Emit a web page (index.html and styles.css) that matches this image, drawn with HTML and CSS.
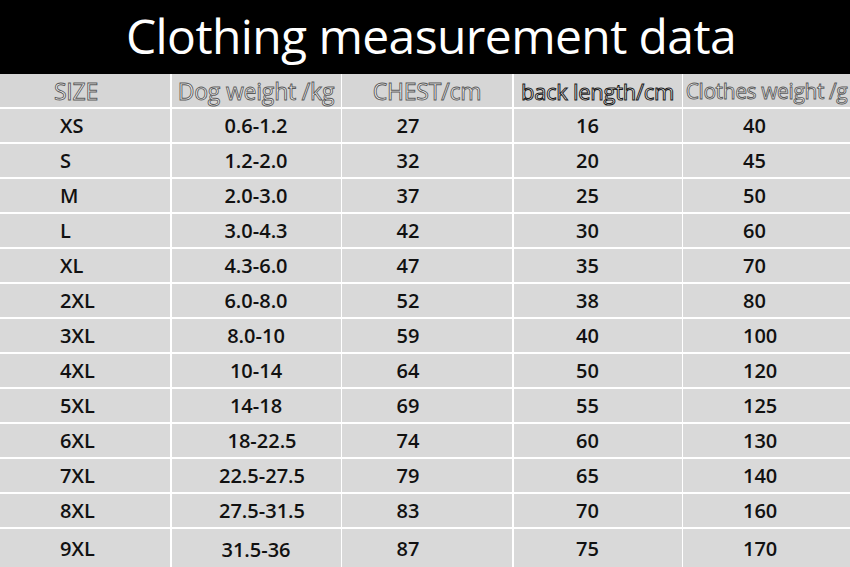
FILE: index.html
```html
<!DOCTYPE html>
<html lang="en">
<head>
<meta charset="utf-8">
<title>Clothing measurement data</title>
<link rel="stylesheet" href="styles.css">
</head>
<body>
<div class="page">
  <h1 class="title">Clothing measurement data</h1>
  <div class="table">
    <div class="th c1">SIZE</div>
    <div class="th c2">Dog weight /kg</div>
    <div class="th c3">CHEST/cm</div>
    <div class="th c4 dark">back length/cm</div>
    <div class="th c5">Clothes weight /g</div>

    <div class="td c1">XS</div><div class="td c2">0.6-1.2</div><div class="td c3">27</div><div class="td c4">16</div><div class="td c5">40</div>
    <div class="td c1">S</div><div class="td c2">1.2-2.0</div><div class="td c3">32</div><div class="td c4">20</div><div class="td c5">45</div>
    <div class="td c1">M</div><div class="td c2">2.0-3.0</div><div class="td c3">37</div><div class="td c4">25</div><div class="td c5">50</div>
    <div class="td c1">L</div><div class="td c2">3.0-4.3</div><div class="td c3">42</div><div class="td c4">30</div><div class="td c5">60</div>
    <div class="td c1">XL</div><div class="td c2">4.3-6.0</div><div class="td c3">47</div><div class="td c4">35</div><div class="td c5">70</div>
    <div class="td c1">2XL</div><div class="td c2">6.0-8.0</div><div class="td c3">52</div><div class="td c4">38</div><div class="td c5">80</div>
    <div class="td c1">3XL</div><div class="td c2">8.0-10</div><div class="td c3">59</div><div class="td c4">40</div><div class="td c5">100</div>
    <div class="td c1">4XL</div><div class="td c2">10-14</div><div class="td c3">64</div><div class="td c4">50</div><div class="td c5">120</div>
    <div class="td c1">5XL</div><div class="td c2">14-18</div><div class="td c3">69</div><div class="td c4">55</div><div class="td c5">125</div>
    <div class="td c1">6XL</div><div class="td c2 shift">18-22.5</div><div class="td c3">74</div><div class="td c4">60</div><div class="td c5">130</div>
    <div class="td c1">7XL</div><div class="td c2 shift">22.5-27.5</div><div class="td c3">79</div><div class="td c4">65</div><div class="td c5">140</div>
    <div class="td c1">8XL</div><div class="td c2 shift">27.5-31.5</div><div class="td c3">83</div><div class="td c4">70</div><div class="td c5">160</div>
    <div class="td c1">9XL</div><div class="td c2 low">31.5-36</div><div class="td c3">87</div><div class="td c4">75</div><div class="td c5">170</div>
  </div>
</div>
</body>
</html>
```

FILE: styles.css
```css
html, body {
  margin: 0;
  padding: 0;
  background: #d9d9d9;
}
.page {
  width: 850px;
  height: 567px;
  display: flex;
  flex-direction: column;
  overflow: hidden;
}
.title {
  margin: 0;
  height: 74px;
  flex: none;
  background: #000;
  color: #fff;
  font-family: "Open Sans", sans-serif;
  font-weight: 400;
  font-size: 48px;
  letter-spacing: -0.6px;
  line-height: 72px;
  text-align: center;
  padding-left: 12px;
  box-sizing: border-box;
}
.table {
  flex: 1;
  display: grid;
  grid-template-columns: 170px 169px 170px 168px 1fr;
  grid-template-rows: 33px repeat(12, 33px) 1fr;
  column-gap: 1.5px;
  row-gap: 2px;
  background: #fff;
}
.th, .td {
  background: #d9d9d9;
  display: flex;
  align-items: center;
  justify-content: center;
  font-family: "Open Sans", sans-serif;
  white-space: nowrap;
}
.th {
  background: #d6d6d6;
  font-size: 23px;
  font-weight: 400;
  color: #fafafa;
  -webkit-text-stroke: 0.9px #5a5a5a;
  letter-spacing: -0.2px;
}
.th.dark {
  -webkit-text-stroke: 1px #1a1a1a;
  font-size: 22px;
  letter-spacing: -0.3px;
}
.th.c5 {
  font-size: 21px;
  letter-spacing: -0.4px;
}
.th.c1 { padding-right: 18px; }
.td {
  font-size: 20px;
  font-weight: 600;
  color: #111;
}
.td.c1 {
  justify-content: flex-start;
  padding-left: 60px;
}
.td.c2 { padding-left: 0; }
.td.c2.shift { padding-left: 12px; }
.td.c2.low { padding-top: 3px; }
.td.c3 { padding-right: 38px; }
.td.c4 { padding-right: 20px; }
.td.c5 {
  justify-content: flex-start;
  padding-left: 60px;
}
```
